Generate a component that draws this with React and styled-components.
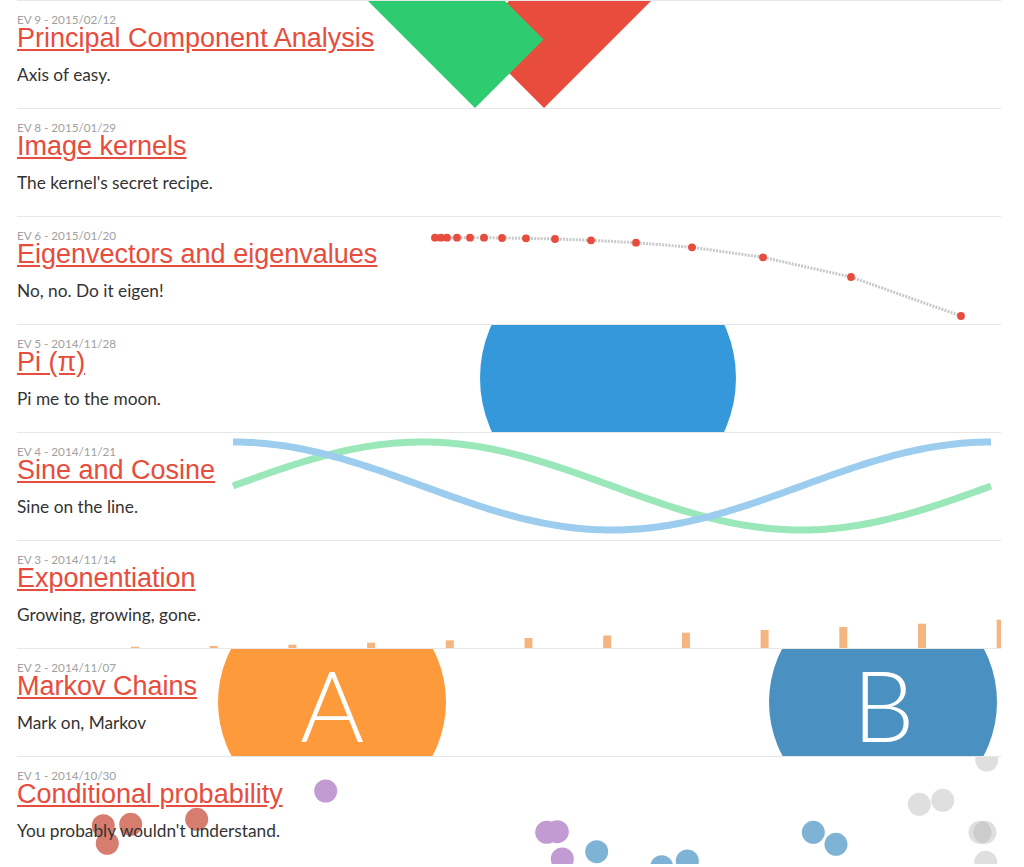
import React from "react";
import styled, { createGlobalStyle } from "styled-components";

const GlobalStyle = createGlobalStyle`
  html, body { margin: 0; padding: 0; background: #fff; }
  body { font-family: Lato, "Open Sans", sans-serif; color: #333; }
`;

const List = styled.main`
  width: 984px;
  margin: 0 0 0 17px;
`;

const Row = styled.article`
  position: relative;
  box-sizing: border-box;
  height: 108px;
  padding-top: 11px;
  border-top: 1px solid #e7e7e7;
`;

const Viz = styled.svg`
  position: absolute;
  top: 0;
  left: 0;
  width: 984px;
  height: 107px;
  overflow: visible;
  z-index: 0;
  pointer-events: none;
`;

const Content = styled.div`
  position: relative;
  z-index: 1;
`;

const Meta = styled.div`
  font-family: Lato, sans-serif;
  font-size: 11.7px;
  line-height: 14px;
  color: #a0a0a0;
`;

const Title = styled.h2`
  margin: 0;
  height: 24px;
  font-family: "Liberation Sans", Arial, sans-serif;
  font-weight: normal;
  font-size: 27px;
  line-height: 24px;
`;

const TitleLink = styled.a`
  display: inline-block;
  height: 24px;
  color: #e74c3c;
  text-decoration: underline;
`;

const Desc = styled.p`
  margin: 14px 0 0;
  font-family: Lato, sans-serif;
  font-size: 17.3px;
  line-height: 22px;
  color: #333;
`;

const Letter = styled.text`
  font-family: Lato, sans-serif;
  font-weight: 300;
  font-size: 98px;
  fill: #fff;
`;

/* ---------- visualisations ---------- */

const PcaViz = () => (
  <>
    <polygon points="544,108 473,37 1005,-495 1076,-424" fill="#e74c3c" />
    <polygon points="475,108 543.5,39.5 102,-402 33.5,-333.5" fill="#2ecc71" />
  </>
);

const eigenDots = [
  [435, 237.7], [441, 237.7], [447, 237.7], [457, 237.7], [470, 237.7],
  [484, 237.7], [502, 238], [526, 238.3], [555, 239], [591, 240.3],
  [636, 242.7], [692, 247.3], [763, 257.3], [851, 277], [961, 316],
];

const EigenViz = () => {
  const pts = eigenDots.map(([x, y]) => [x, y - 216]);
  return (
    <>
      <polyline
        points={pts.map((p) => p.join(",")).join(" ")}
        fill="none"
        stroke="#c9c9c9"
        strokeWidth="3"
        strokeDasharray="2 1.2"
      />
      {pts.map(([x, y], i) => (
        <circle key={i} cx={x} cy={y} r="3.9" fill="#e74c3c" />
      ))}
    </>
  );
};

const PiViz = () => <circle cx="608" cy="54" r="128" fill="#3498db" />;

const wave = (fn) => {
  const pts = [];
  for (let x = 233; x <= 991; x += 4) {
    const t = ((x - 233) / 758) * Math.PI * 2;
    pts.push(`${x},${(54 - 44 * fn(t)).toFixed(2)}`);
  }
  const t = Math.PI * 2;
  pts.push(`991,${(54 - 44 * fn(t)).toFixed(2)}`);
  return pts.join(" ");
};

const SineViz = () => (
  <>
    <polyline points={wave(Math.sin)} fill="none" stroke="#9ae7ba" strokeWidth="7" />
    <polyline points={wave(Math.cos)} fill="none" stroke="#9ccdee" strokeWidth="7" />
  </>
);

const barHeights = [1.3, 2, 3.3, 5.3, 7.7, 10, 12.5, 15.3, 18, 21, 24.3, 28.3];

const ExpViz = () => (
  <>
    {barHeights.map((h, i) => (
      <rect
        key={i}
        x={131 + i * 78.7}
        y={108 - h}
        width="8"
        height={h}
        fill="#f5b581"
      />
    ))}
  </>
);

const MarkovViz = () => (
  <>
    <circle cx="332" cy="54" r="114" fill="#fd9a3c" />
    <circle cx="883" cy="54" r="114" fill="#4a91c2" />
  </>
);

const MarkovLabels = () => (
  <>
    <Letter x="332" y="93.7" textAnchor="middle">A</Letter>
    <Letter x="883.5" y="93.7" textAnchor="middle">B</Letter>
  </>
);

const probDots = [
  { x: 325.7, y: 791, c: "#c39bd3" },
  { x: 103.3, y: 825.7, c: "#d67d70" },
  { x: 130.7, y: 824.3, c: "#d67d70" },
  { x: 107.3, y: 843.3, c: "#d67d70" },
  { x: 196.7, y: 819.3, c: "#d67d70" },
  { x: 546.7, y: 832.3, c: "#c39bd3" },
  { x: 557.3, y: 831.7, c: "#c39bd3" },
  { x: 562.3, y: 859, c: "#c39bd3" },
  { x: 596.7, y: 851.7, c: "#7fb3d5" },
  { x: 661.7, y: 866.7, c: "#7fb3d5" },
  { x: 687.3, y: 861, c: "#7fb3d5" },
  { x: 813.3, y: 832.3, c: "#7fb3d5" },
  { x: 836, y: 844.3, c: "#7fb3d5" },
  { x: 986.7, y: 760, c: "#b0b0b0", o: 0.4 },
  { x: 919.3, y: 804.3, c: "#b0b0b0", o: 0.4 },
  { x: 942.7, y: 800.3, c: "#b0b0b0", o: 0.4 },
  { x: 980, y: 832.3, c: "#b0b0b0", o: 0.4 },
  { x: 985, y: 832.3, c: "#b0b0b0", o: 0.4 },
  { x: 985.7, y: 862.3, c: "#b0b0b0", o: 0.4 },
];

const ProbViz = () => (
  <>
    {probDots.map((d, i) => (
      <circle
        key={i}
        cx={d.x}
        cy={d.y - 756}
        r="11.5"
        fill={d.c}
        fillOpacity={d.o ?? 1}
      />
    ))}
  </>
);

const posts = [
  { ev: 9, date: "2015/02/12", title: "Principal Component Analysis", desc: "Axis of easy.", Viz: PcaViz },
  { ev: 8, date: "2015/01/29", title: "Image kernels", desc: "The kernel's secret recipe.", Viz: null },
  { ev: 6, date: "2015/01/20", title: "Eigenvectors and eigenvalues", desc: "No, no. Do it eigen!", Viz: EigenViz },
  { ev: 5, date: "2014/11/28", title: "Pi (\u03C0)", desc: "Pi me to the moon.", Viz: PiViz },
  { ev: 4, date: "2014/11/21", title: "Sine and Cosine", desc: "Sine on the line.", Viz: SineViz },
  { ev: 3, date: "2014/11/14", title: "Exponentiation", desc: "Growing, growing, gone.", Viz: ExpViz },
  { ev: 2, date: "2014/11/07", title: "Markov Chains", desc: "Mark on, Markov", Viz: MarkovViz, Labels: MarkovLabels },
  { ev: 1, date: "2014/10/30", title: "Conditional probability", desc: "You probably wouldn't understand.", Viz: ProbViz },
];

export default function App() {
  return (
    <>
      <GlobalStyle />
      <List>
        {posts.map(({ ev, date, title, desc, Viz: V, Labels }) => (
          <Row key={ev}>
            {V && (
              <Viz viewBox="17 1 984 107" preserveAspectRatio="none">
                <defs>
                  <clipPath id={`clip-${ev}`}>
                    <rect x="17" y="1" width="984" height="107" />
                  </clipPath>
                </defs>
                <g clipPath={`url(#clip-${ev})`}>
                  <V />
                </g>
                {Labels && <Labels />}
              </Viz>
            )}
            <Content>
              <Meta>EV {ev} - {date}</Meta>
              <Title>
                <TitleLink href="#">{title}</TitleLink>
              </Title>
              <Desc>{desc}</Desc>
            </Content>
          </Row>
        ))}
      </List>
    </>
  );
}
